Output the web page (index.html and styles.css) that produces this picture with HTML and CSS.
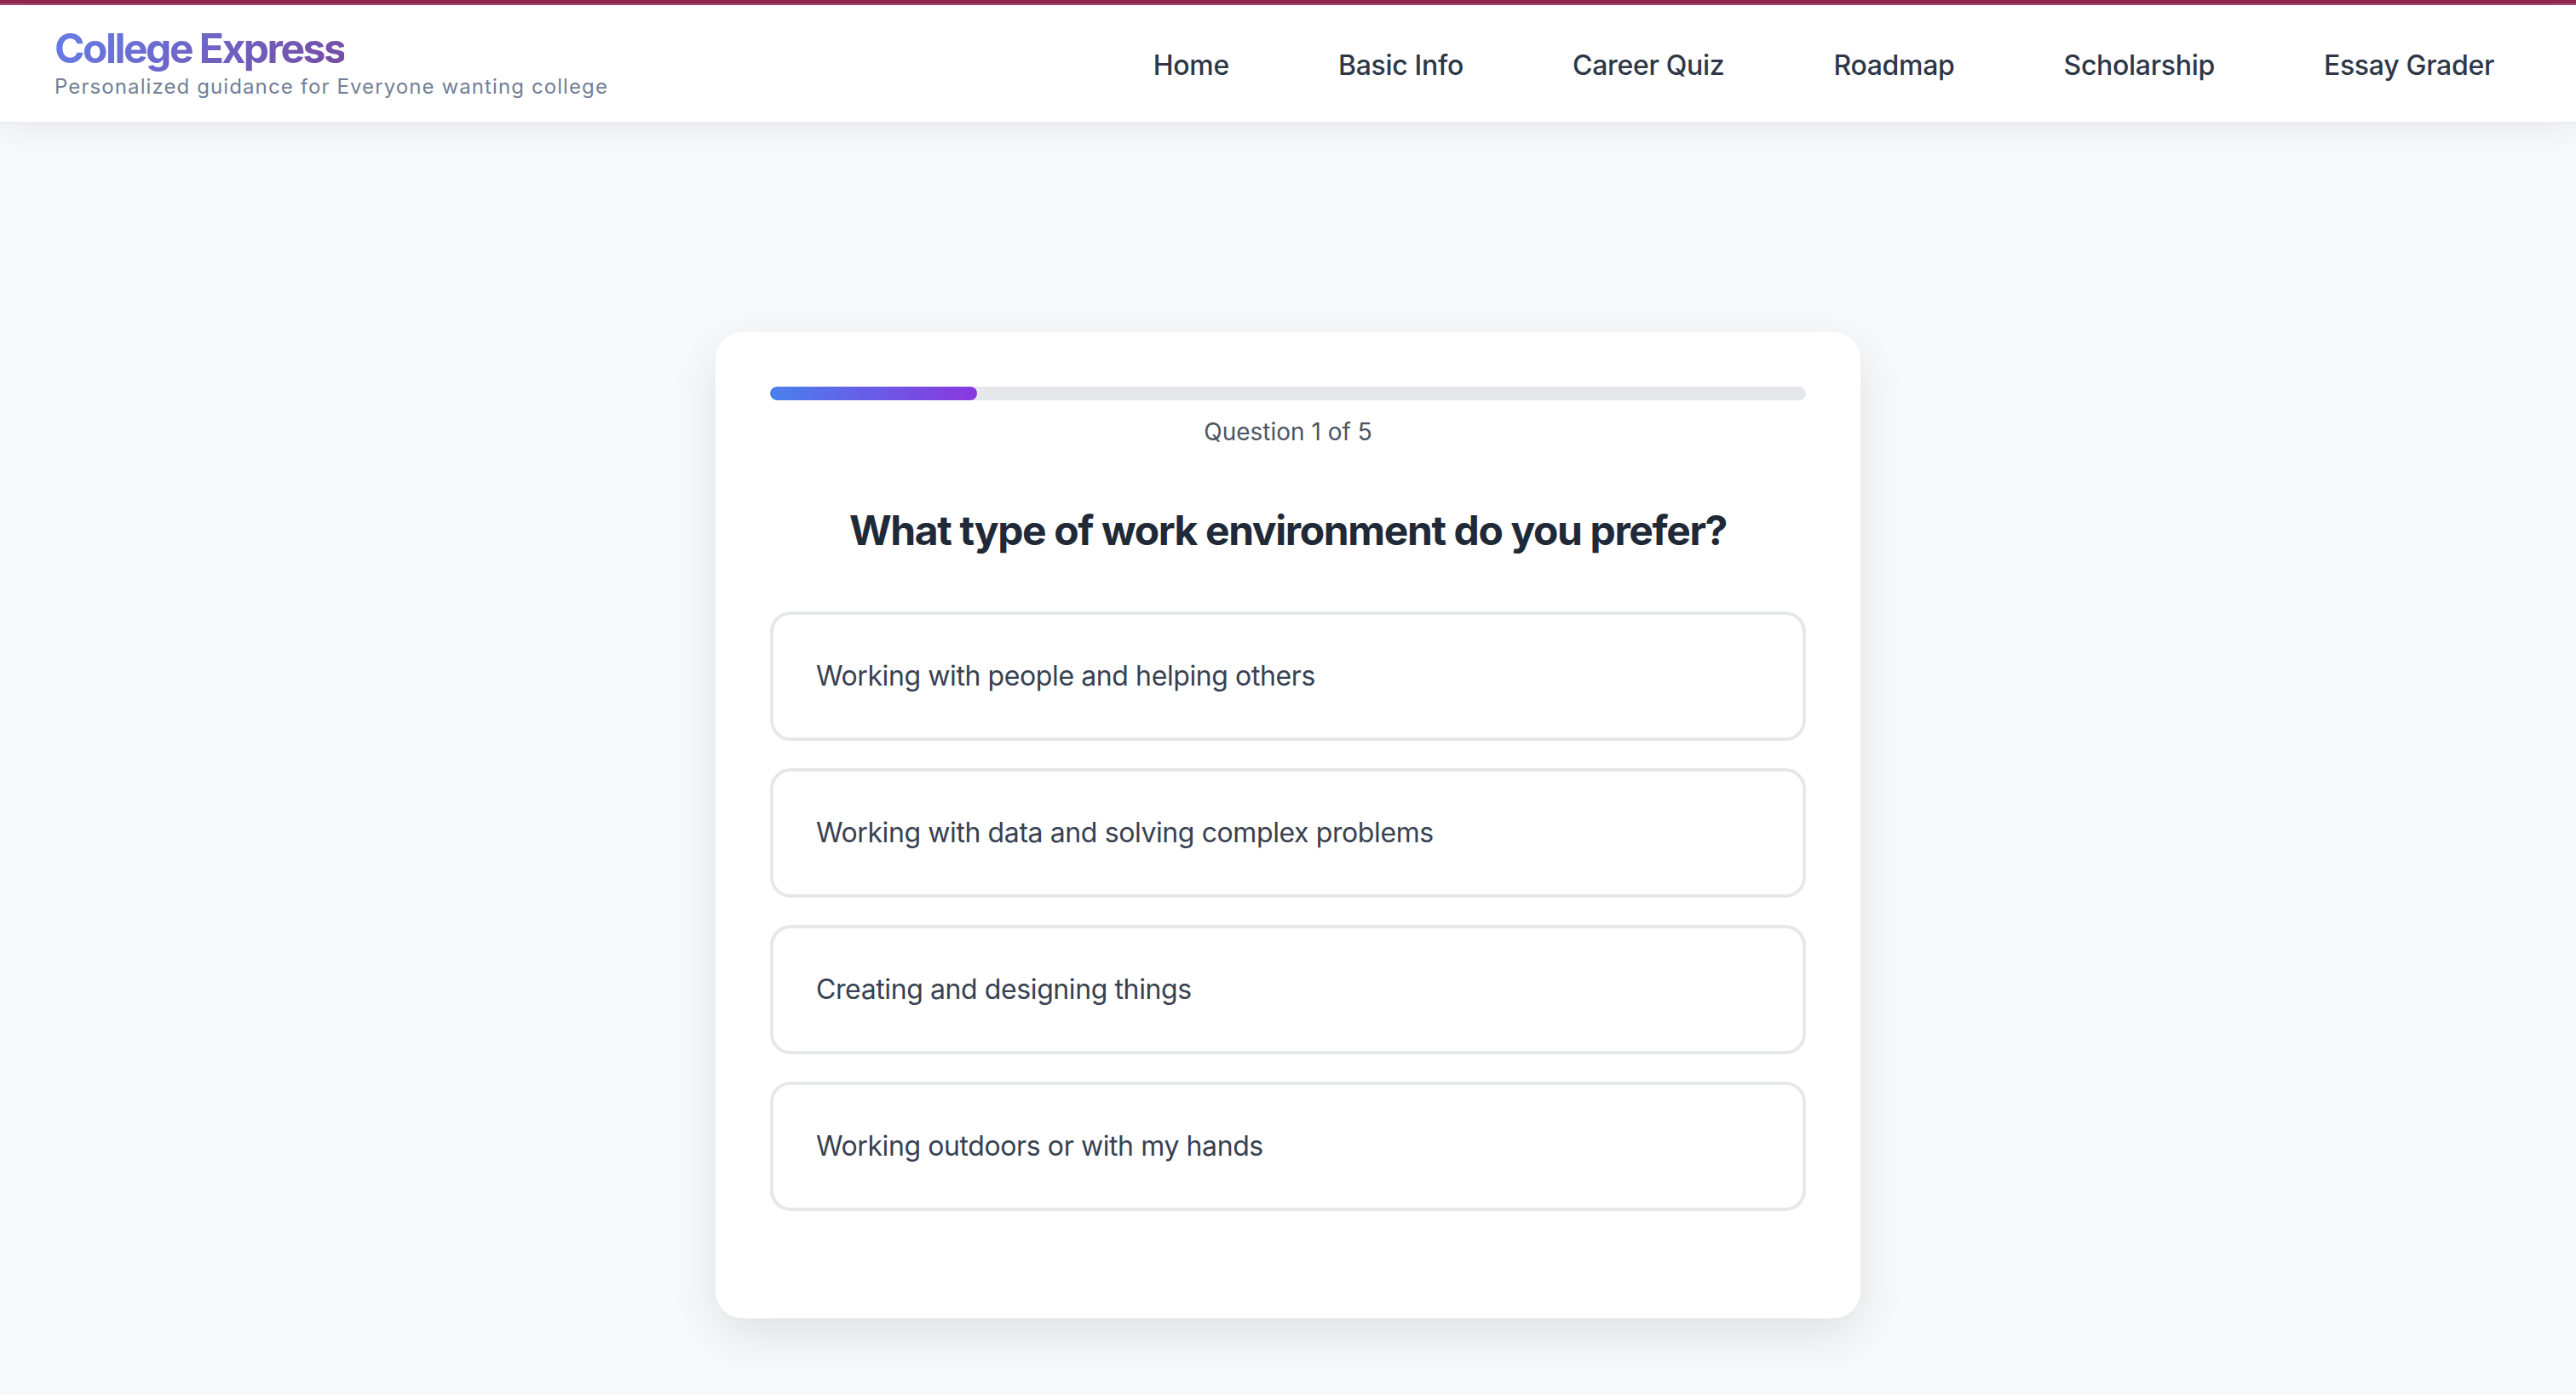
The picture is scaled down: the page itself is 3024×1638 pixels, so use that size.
FILE: index.html
```html
<!DOCTYPE html>
<html lang="en">
<head>
<meta charset="utf-8">
<title>College Express - Career Quiz</title>
<link rel="stylesheet" href="styles.css">
</head>
<body>
<div class="topline"></div>
<header class="header">
  <div class="brand">
    <div class="logo">College Express</div>
    <div class="tagline">Personalized guidance for Everyone wanting college</div>
  </div>
  <nav class="nav">
    <a class="nav-link" href="#">Home</a>
    <a class="nav-link" href="#">Basic Info</a>
    <a class="nav-link" href="#">Career Quiz</a>
    <a class="nav-link" href="#">Roadmap</a>
    <a class="nav-link" href="#">Scholarship</a>
    <a class="nav-link" href="#">Essay Grader</a>
  </nav>
</header>
<main class="main">
  <section class="card">
    <div class="progress"><div class="progress-fill" style="width:20%"></div></div>
    <div class="progress-text">Question 1 of 5</div>
    <h1 class="question">What type of work environment do you prefer?</h1>
    <div class="options">
      <button class="option">Working with people and helping others</button>
      <button class="option">Working with data and solving complex problems</button>
      <button class="option">Creating and designing things</button>
      <button class="option">Working outdoors or with my hands</button>
    </div>
  </section>
</main>
</body>
</html>
```
FILE: styles.css
```css
* { box-sizing: border-box; }
html, body { margin: 0; padding: 0; }
body {
  font-family: Inter, "Noto Sans", "Liberation Sans", sans-serif;
  background: #f8f9fb;
  color: #1f2937;
  min-height: 1638px;
}
.topline {
  height: 6px;
  background: linear-gradient(#93254f 0 4px, #a74c71 4px 6px);
}
.header {
  height: 139px;
  background: #fff;
  display: flex;
  align-items: center;
  justify-content: space-between;
  padding: 0 64px;
  box-shadow: 0 4px 40px rgba(0,0,0,0.08);
  border-bottom: 2px solid #ebebf7;
  position: relative;
  z-index: 1;
}
.brand { display: flex; flex-direction: column; margin-top: -4px; }
.logo {
  font-size: 48px;
  font-weight: 700;
  letter-spacing: -2.5px;
  line-height: 1.2;
  background: linear-gradient(135deg, #667eea 0%, #764ba2 100%);
  -webkit-background-clip: text;
  background-clip: text;
  color: transparent;
  width: max-content;
}
.tagline {
  font-size: 24px;
  color: #718096;
  letter-spacing: 1.1px;
  line-height: 1.3;
}
.nav { display: flex; gap: 64px; align-items: center; padding-top: 4px; }
.nav-link {
  font-size: 32px;
  font-weight: 500;
  color: #2d3748;
  text-decoration: none;
  padding: 16px 32px;
  letter-spacing: -0.3px;
}
.main {
  display: flex;
  justify-content: center;
  padding-top: 245px;
}
.card {
  width: 1344px;
  background: #fff;
  border-radius: 32px;
  padding: 64px 64px 126px;
  box-shadow: 0 20px 60px rgba(0,0,0,0.10);
}
.progress {
  height: 16px;
  background: #e5e7eb;
  border-radius: 8px;
  overflow: hidden;
}
.progress-fill {
  height: 100%;
  border-radius: 8px;
  background: linear-gradient(90deg, #4a80ec 0%, #8a37e0 100%);
}
.progress-text {
  margin-top: 16px;
  text-align: center;
  font-size: 28px;
  line-height: 1.5;
  color: #4b5563;
}
.question {
  margin: 66px 0 66px;
  text-align: center;
  font-size: 48px;
  line-height: 1.2;
  font-weight: 700;
  color: #1f2937;
  letter-spacing: -1.4px;
}
.options { display: flex; flex-direction: column; gap: 32px; }
.option {
  display: block;
  width: 100%;
  text-align: left;
  font-family: inherit;
  font-size: 32px;
  line-height: 1.5;
  color: #374151;
  background: #fff;
  border: 4px solid #e5e7eb;
  border-radius: 24px;
  padding: 48px 50px;
  letter-spacing: -0.4px;
  cursor: pointer;
}
```
